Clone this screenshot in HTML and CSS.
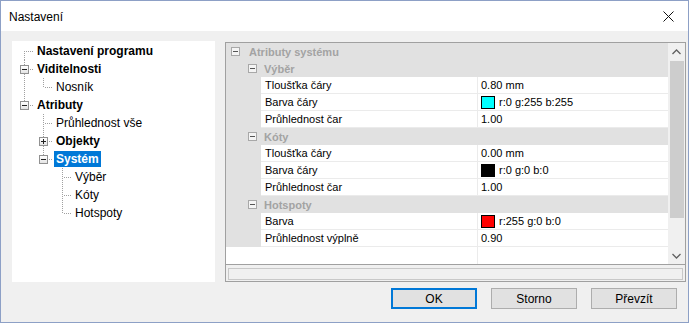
FILE: index.html
```html
<!DOCTYPE html>
<html lang="cs">
<head>
    <meta charset="UTF-8">
    <meta name="viewport" content="width=device-width, initial-scale=1.0">
    <title>Nastavení</title>
    <link rel="stylesheet" href="styles.css">
</head>
<body>

    <div class="window">
        <div class="titlebar">
            <span class="title">Nastavení</span>
            <svg class="close" width="11" height="11" viewBox="0 0 11 11">
                <path d="M0.5 0.5 L10.5 10.5 M10.5 0.5 L0.5 10.5" stroke="#111" stroke-width="1" fill="none"/>
            </svg>
        </div>

        <div class="content">
            <div class="panels">
                <!-- navigation tree -->
                <div class="tree">
                    <div class="node"><span class="g first"></span><span class="label bold">Nastavení programu</span></div>
                    <div class="node"><span class="g tee"><i class="box"></i></span><span class="label bold">Viditelnosti</span></div>
                    <div class="node"><span class="g line"></span><span class="g last"></span><span class="label">Nosník</span></div>
                    <div class="node"><span class="g last"><i class="box"></i></span><span class="label bold">Atributy</span></div>
                    <div class="node"><span class="g"></span><span class="g tee"></span><span class="label">Průhlednost vše</span></div>
                    <div class="node"><span class="g"></span><span class="g tee"><i class="box plus"></i></span><span class="label bold">Objekty</span></div>
                    <div class="node"><span class="g"></span><span class="g last"><i class="box"></i></span><span class="label bold selected">Systém</span></div>
                    <div class="node"><span class="g"></span><span class="g"></span><span class="g tee"></span><span class="label">Výběr</span></div>
                    <div class="node"><span class="g"></span><span class="g"></span><span class="g tee"></span><span class="label">Kóty</span></div>
                    <div class="node"><span class="g"></span><span class="g"></span><span class="g last"></span><span class="label">Hotspoty</span></div>
                </div>

                <!-- property grid -->
                <div class="grid">
                    <div class="view">
                        <div class="rows">
                            <div class="cat"><i class="box"></i><span>Atributy systému</span></div>
                            <div class="cat sub"><i class="box"></i><span>Výběr</span></div>
                            <div class="prop"><span class="margin"></span><span class="name">Tloušťka čáry</span><span class="value">0.80 mm</span></div>
                            <div class="prop"><span class="margin"></span><span class="name">Barva čáry</span><span class="value"><i class="swatch cyan"></i>r:0 g:255 b:255</span></div>
                            <div class="prop"><span class="margin"></span><span class="name">Průhlednost čar</span><span class="value">1.00</span></div>
                            <div class="cat sub"><i class="box"></i><span>Kóty</span></div>
                            <div class="prop"><span class="margin"></span><span class="name">Tloušťka čáry</span><span class="value">0.00 mm</span></div>
                            <div class="prop"><span class="margin"></span><span class="name">Barva čáry</span><span class="value"><i class="swatch black"></i>r:0 g:0 b:0</span></div>
                            <div class="prop"><span class="margin"></span><span class="name">Průhlednost čar</span><span class="value">1.00</span></div>
                            <div class="cat sub"><i class="box"></i><span>Hotspoty</span></div>
                            <div class="prop"><span class="margin"></span><span class="name">Barva</span><span class="value"><i class="swatch red"></i>r:255 g:0 b:0</span></div>
                            <div class="prop"><span class="margin"></span><span class="name">Průhlednost výplně</span><span class="value">0.90</span></div>
                            <div class="filler"></div>
                        </div>
                        <div class="scrollbar">
                            <div class="arrow">
                                <svg width="9" height="6" viewBox="0 0 9 6"><path d="M0.5 5 L4.5 1 L8.5 5" stroke="#606060" stroke-width="1.3" fill="none"/></svg>
                            </div>
                            <div class="thumb"></div>
                            <div class="arrow down">
                                <svg width="9" height="6" viewBox="0 0 9 6"><path d="M0.5 1 L4.5 5 L8.5 1" stroke="#606060" stroke-width="1.3" fill="none"/></svg>
                            </div>
                        </div>
                    </div>
                    <div class="help"></div>
                </div>
            </div>

            <div class="buttons">
                <button class="default">OK</button>
                <button>Storno</button>
                <button>Převzít</button>
            </div>
        </div>
    </div>

</body>
</html>
```

FILE: styles.css
```css
body {
    margin: 0;
    font-family: "Liberation Sans", Arial, sans-serif;
    font-size: 12px;
    color: #000;
    background: #f0f0f0;
}
.window {
    width: 689px;
    height: 323px;
    box-sizing: border-box;
    border: 1px solid #8da0c6;
    display: flex;
    flex-direction: column;
    background: #f0f0f0;
}
.titlebar {
    height: 30px;
    background: white;
    display: flex;
    align-items: center;
    justify-content: space-between;
    padding: 0 14px 0 8px;
    flex: none;
}
.title {
    font-size: 12px;
    margin-top: 1px;
}
.close {
    margin-top: 1px;
}
.content {
    flex: 1;
    display: flex;
    flex-direction: column;
    padding: 10px 2px 0 11px;
}
.panels {
    display: flex;
    gap: 10px;
    align-items: flex-start;
}

/* tree */
.tree {
    width: 200px;
    height: 240px;
    background: white;
    padding: 1px 0 0 3px;
    flex: none;
}
.node {
    display: flex;
    height: 18px;
}
.g {
    width: 19px;
    height: 18px;
    flex: none;
    display: flex;
    justify-content: center;
    align-items: flex-start;
    background-repeat: no-repeat;
}
.g.line {
    background-image: repeating-linear-gradient(to bottom, #a0a0a0 0 1px, transparent 1px 2px);
    background-size: 1px 18px;
    background-position: 9px 0;
}
.g.tee {
    background-image:
        repeating-linear-gradient(to bottom, #a0a0a0 0 1px, transparent 1px 2px),
        repeating-linear-gradient(to right, #a0a0a0 0 1px, transparent 1px 2px);
    background-size: 1px 18px, 9px 1px;
    background-position: 9px 0, 11px 9px;
}
.g.last {
    background-image:
        repeating-linear-gradient(to bottom, #a0a0a0 0 1px, transparent 1px 2px),
        repeating-linear-gradient(to right, #a0a0a0 0 1px, transparent 1px 2px);
    background-size: 1px 10px, 9px 1px;
    background-position: 9px 0, 11px 9px;
}
.g.first {
    background-image:
        repeating-linear-gradient(to bottom, #a0a0a0 0 1px, transparent 1px 2px),
        repeating-linear-gradient(to right, #a0a0a0 0 1px, transparent 1px 2px);
    background-size: 1px 9px, 9px 1px;
    background-position: 9px 9px, 11px 9px;
}
.box {
    display: block;
    width: 7px;
    height: 7px;
    margin-top: 5px;
    border: 1px solid #919191;
    background:
        linear-gradient(#222, #222) center / 5px 1px no-repeat,
        linear-gradient(#fff, #e4e4e4);
    flex: none;
}
.box.plus {
    background:
        linear-gradient(#222, #222) center / 5px 1px no-repeat,
        linear-gradient(#222, #222) center / 1px 5px no-repeat,
        linear-gradient(#fff, #e4e4e4);
}
.label {
    height: 16px;
    line-height: 16px;
    margin: 1px 0 0 1px;
    padding: 0 2px;
    white-space: nowrap;
}
.bold {
    font-weight: bold;
}
.selected {
    background: #0078d7;
    color: white;
}

/* property grid */
.grid {
    width: 459px;
    height: 238px;
    margin-top: 1px;
    border: 1px solid #a0a0a0;
    display: flex;
    flex-direction: column;
    font-size: 11px;
    flex: none;
}
.view {
    height: 221px;
    display: flex;
    border-bottom: 1px solid #a0a0a0;
    background: white;
}
.rows {
    flex: 1;
    display: flex;
    flex-direction: column;
}
.cat {
    height: 17px;
    background: #e1e1e1;
    display: flex;
    align-items: center;
    color: #a3a3a3;
    font-weight: bold;
    flex: none;
}
.cat .box {
    margin: 0 9px 0 5px;
    border-color: #a8a8a8;
    background:
        linear-gradient(#555, #555) center / 5px 1px no-repeat,
        #f4f4f4;
}
.cat.sub .box {
    margin-left: 22px;
    margin-right: 7px;
}
.prop {
    height: 17px;
    display: flex;
    flex: none;
}
.margin {
    width: 35px;
    background: #e1e1e1;
    flex: none;
}
.name {
    width: 212px;
    padding-left: 4px;
    border-right: 1px solid #ebebeb;
    border-bottom: 1px solid #ebebeb;
    line-height: 16px;
    white-space: nowrap;
    flex: none;
}
.value {
    flex: 1;
    padding-left: 3px;
    border-bottom: 1px solid #ebebeb;
    line-height: 16px;
    display: flex;
    align-items: center;
    white-space: nowrap;
}
.swatch {
    width: 12px;
    height: 11px;
    border: 1px solid #000;
    margin-right: 4px;
}
.swatch.cyan {
    background: #00ffff;
}
.swatch.black {
    background: #000;
}
.swatch.red {
    background: #ff0000;
}
.filler {
    flex: 1;
    margin-left: 251px;
    border-left: 1px solid #ebebeb;
}
.scrollbar {
    width: 17px;
    background: #f0f0f0;
    display: flex;
    flex-direction: column;
    flex: none;
}
.arrow {
    height: 17px;
    display: flex;
    align-items: center;
    justify-content: center;
}
.thumb {
    height: 157px;
    margin: 1px 1px 0 2px;
    background: #cdcdcd;
}
.arrow.down {
    margin-top: auto;
}
.help {
    height: 10px;
    margin: 3px 2px 0 2px;
    border: 1px solid #c8c8c8;
    background: #f0f0f0;
}

/* dialog buttons */
.buttons {
    display: flex;
    justify-content: flex-end;
    gap: 14px;
    margin-top: 6px;
    padding-right: 9px;
}
button {
    width: 86px;
    height: 21px;
    font-family: "Liberation Sans", Arial, sans-serif;
    font-size: 12px;
    background: #e1e1e1;
    border: 1px solid #adadad;
    padding: 0;
    color: #000;
}
button.default {
    border: 2px solid #0078d7;
}
```
